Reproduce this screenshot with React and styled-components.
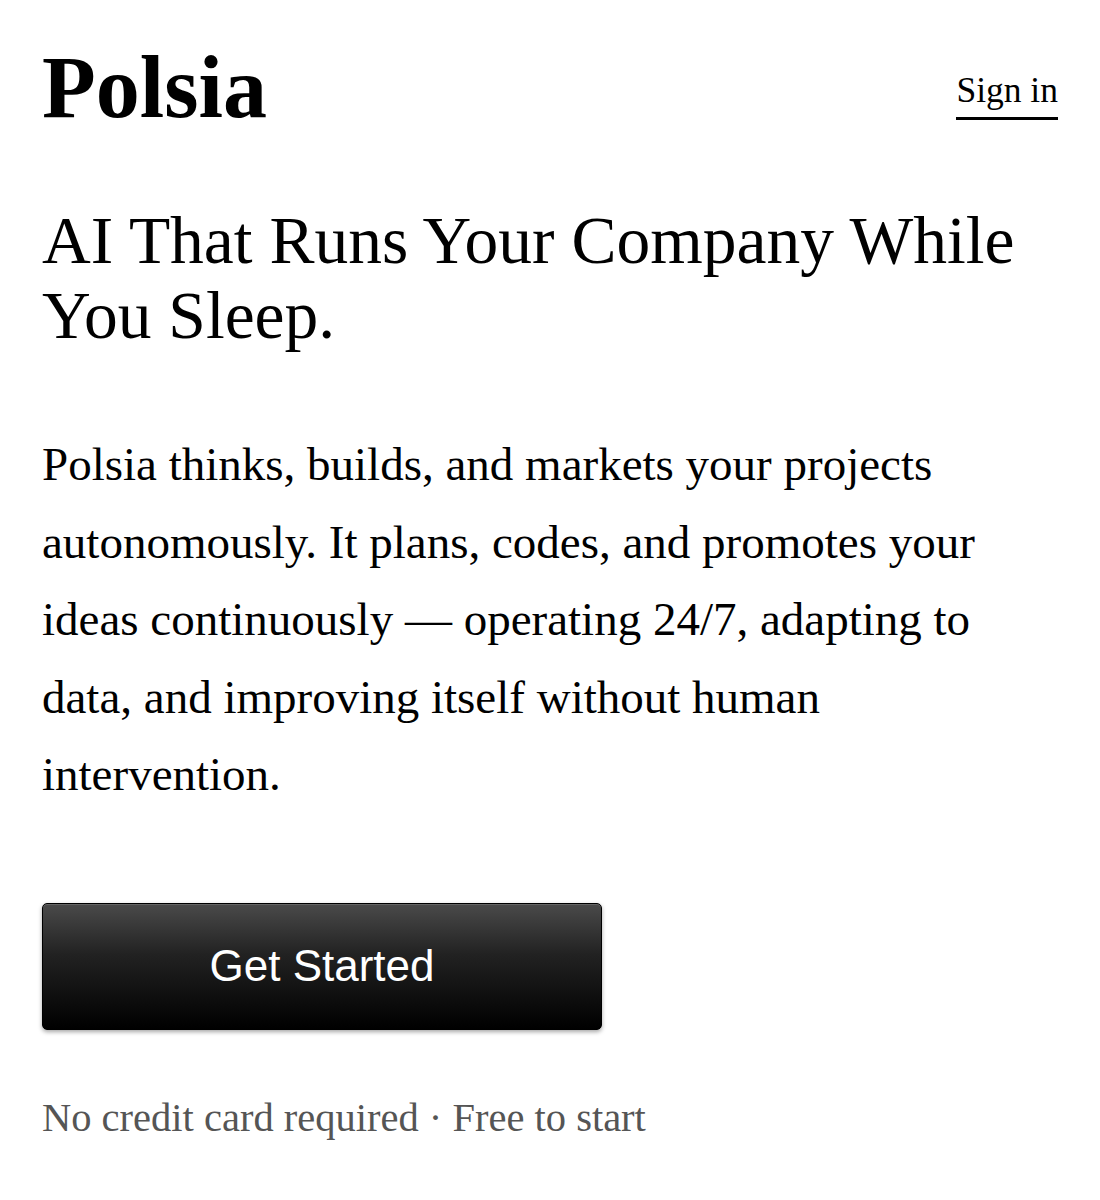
import React from "react";
import styled, { createGlobalStyle } from "styled-components";

const Global = createGlobalStyle`
  html, body { margin: 0; padding: 0; background: #ffffff; }
  body { font-family: "Liberation Serif", "Times New Roman", serif; color: #000; }
`;

const Page = styled.div`
  padding: 0 42px;
  display: flex;
  flex-direction: column;
`;

const Header = styled.header`
  display: flex;
  justify-content: space-between;
  align-items: flex-start;
  padding-top: 38px;
`;

const Logo = styled.div`
  font-family: "Liberation Serif", serif;
  font-weight: 700;
  font-size: 88px;
  line-height: 100px;
`;

const SignIn = styled.a`
  font-family: "Liberation Serif", serif;
  font-size: 35.5px;
  line-height: 40px;
  color: #000;
  text-decoration: none;
  border-bottom: 3px solid #000;
  padding-bottom: 7px;
  margin-top: 32px;
`;

const Headline = styled.h1`
  font-family: "Liberation Serif", serif;
  font-weight: 400;
  font-size: 67.5px;
  line-height: 75px;
  margin: 65px 0 0;
`;

const Lead = styled.p`
  font-family: "Liberation Serif", serif;
  font-size: 47px;
  line-height: 77.5px;
  margin: 73px 0 0;
`;

const CTA = styled.button`
  margin-top: 89px;
  width: 560px;
  height: 127px;
  border: 1px solid #000;
  border-radius: 5px;
  background: linear-gradient(to bottom, #4a4a4a 0%, #222 40%, #000 100%);
  box-shadow: 0 2px 4px rgba(0, 0, 0, 0.35), inset 0 1px 0 rgba(255,255,255,0.15);
  color: #fff;
  font-family: "Liberation Sans", Arial, sans-serif;
  font-size: 44px;
  cursor: pointer;
`;

const Note = styled.p`
  font-family: "Liberation Serif", serif;
  font-size: 40.5px;
  line-height: 48px;
  color: #555;
  margin: 64px 0 0;
`;

export default function App() {
  return (
    <>
      <Global />
      <Page>
        <Header>
          <Logo>Polsia</Logo>
          <SignIn href="#">Sign in</SignIn>
        </Header>
        <Headline>AI That Runs Your Company While You Sleep.</Headline>
        <Lead>
          Polsia thinks, builds, and markets your projects autonomously. It plans, codes, and
          promotes your ideas continuously — operating 24/7, adapting to data, and improving
          itself without human intervention.
        </Lead>
        <div>
          <CTA>Get Started</CTA>
        </div>
        <Note>No credit card required · Free to start</Note>
      </Page>
    </>
  );
}
